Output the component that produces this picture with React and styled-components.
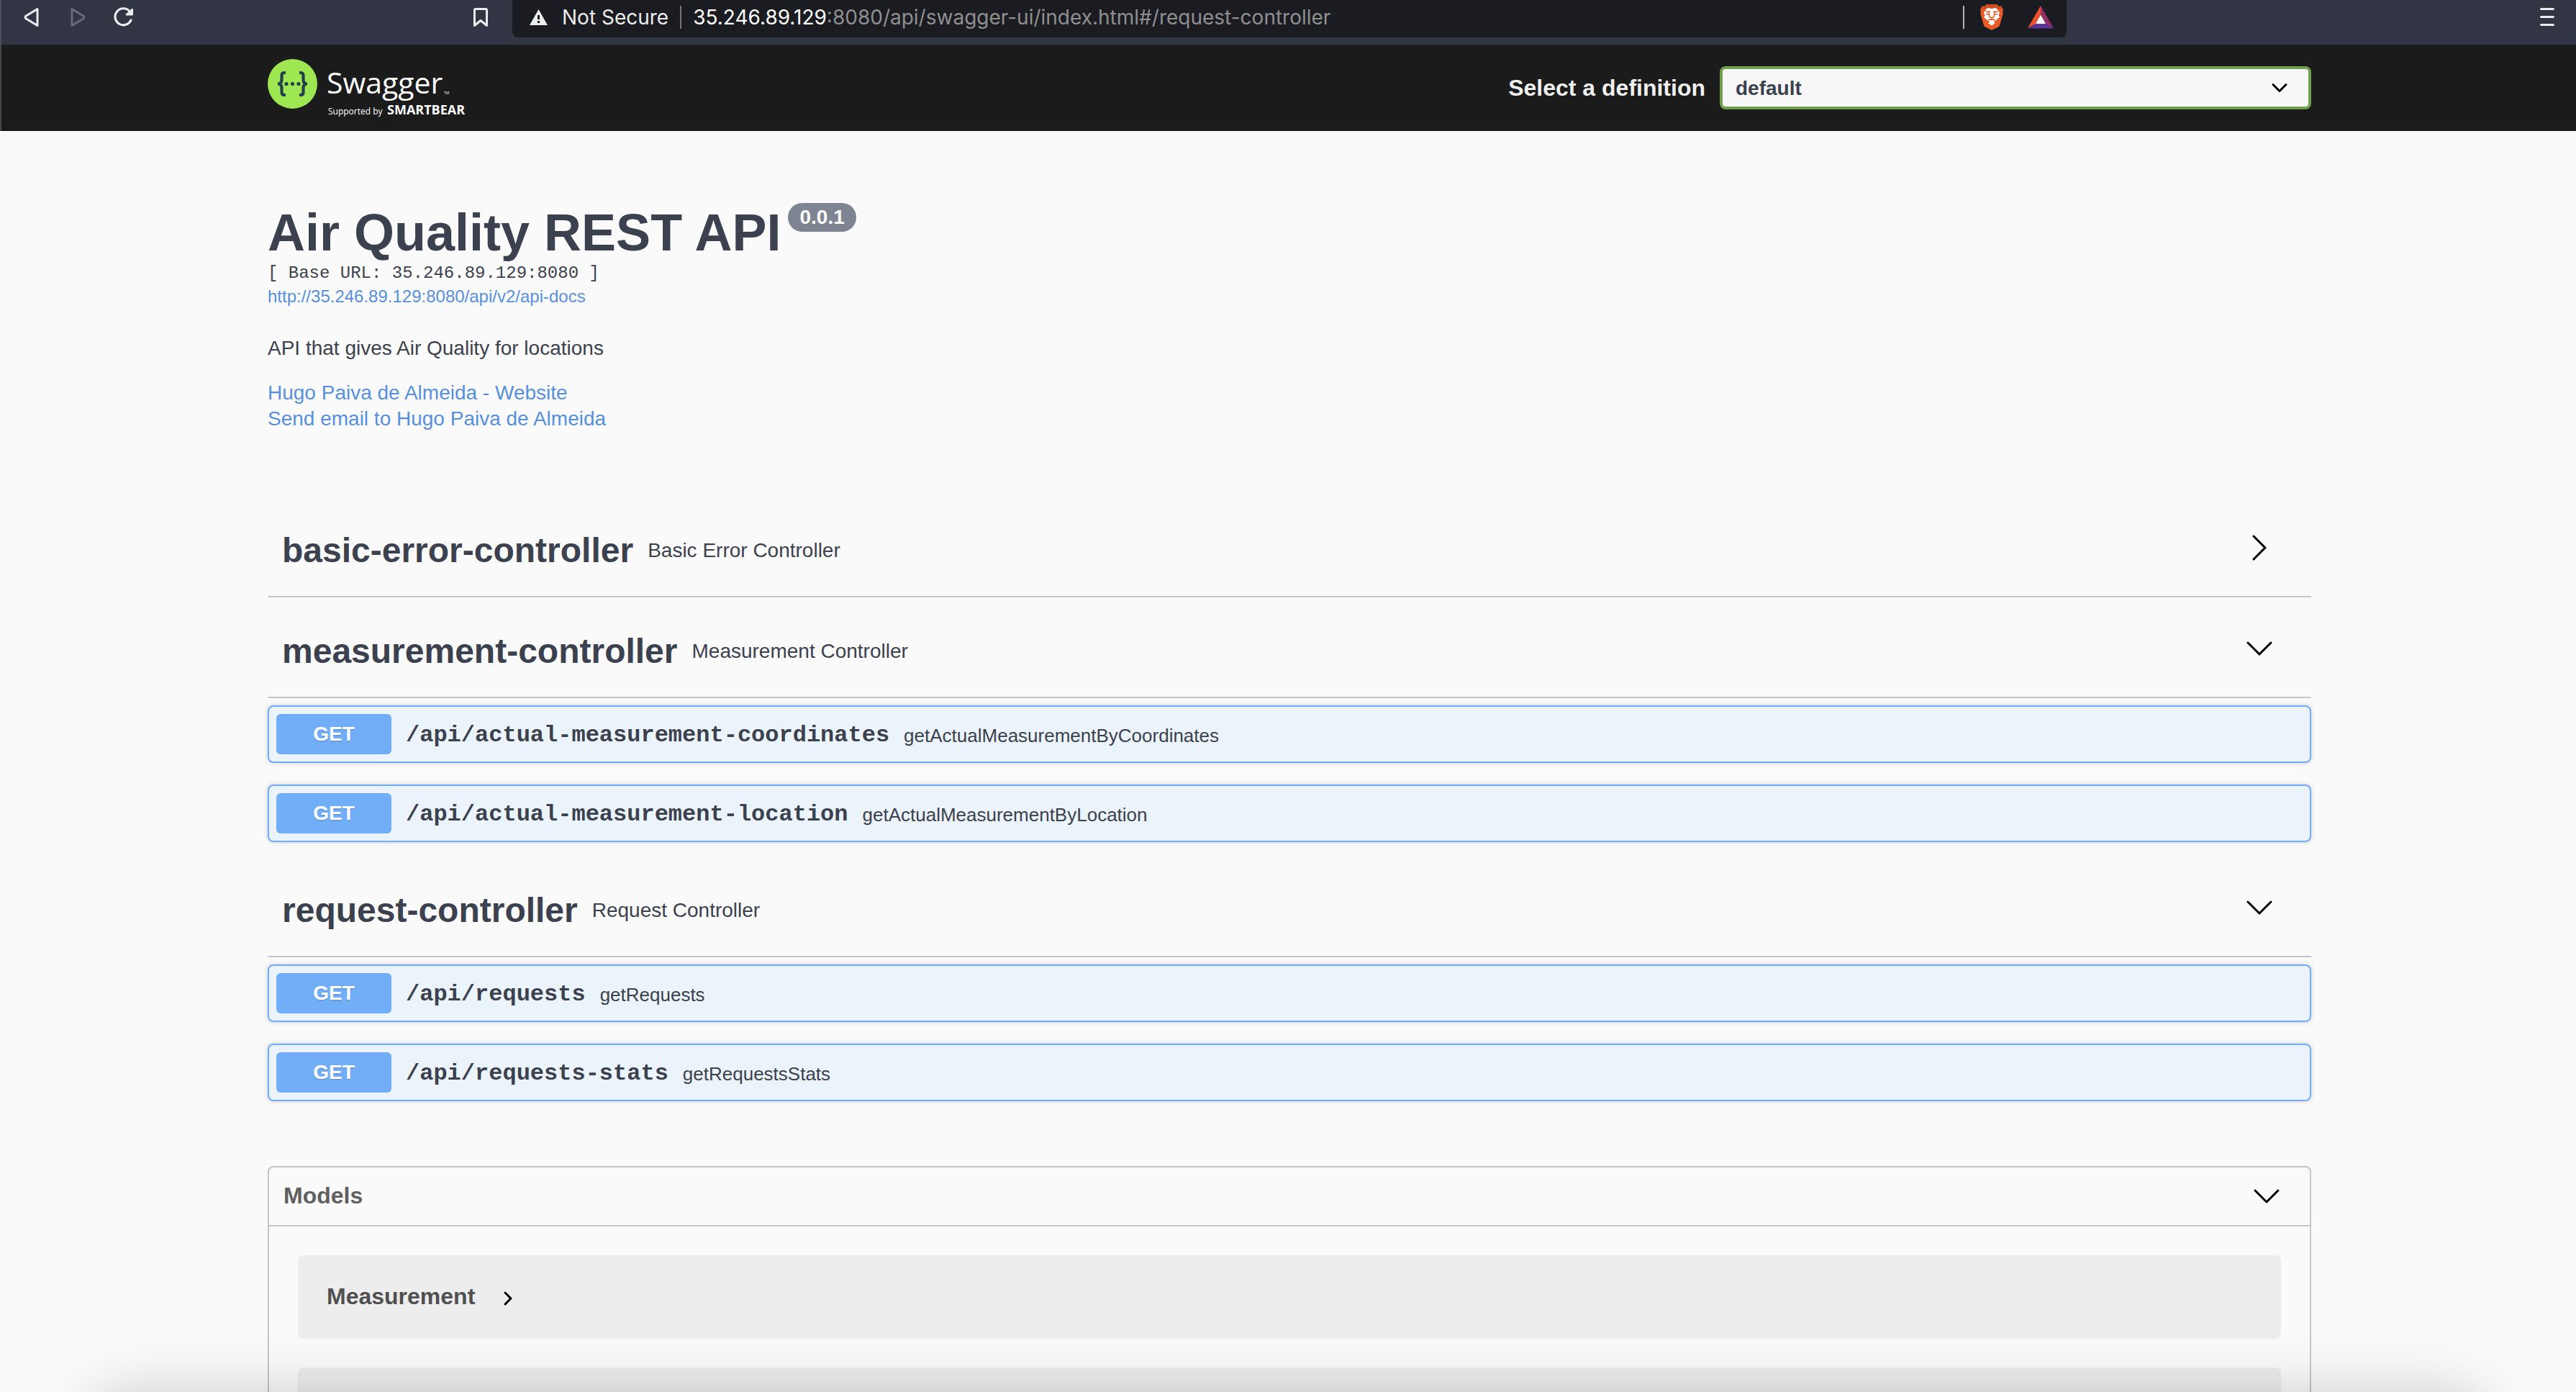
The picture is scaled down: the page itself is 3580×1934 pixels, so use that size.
import React from "react";
import styled, { createGlobalStyle } from "styled-components";

const sans = `"Liberation Sans", Arial, sans-serif`;
const mono = `"Liberation Mono", "Courier New", monospace`;
const ui = `Inter, Roboto, sans-serif`;

const color = {
  page: "#fafafa",
  text: "#3c414f",
  link: "#5890dc",
  line: "#c4c4cb",
  get: "#72adf8",
  getSoft: "#ebf3fb",
  chrome: "#323544",
  address: "#1b1c21",
  topbar: "#1b1b1b",
};

const GlobalStyle = createGlobalStyle`
  * { box-sizing: border-box; }
  html, body { height: 100%; }
  body {
    margin: 0;
    overflow: hidden;
    background: ${color.page};
    color: ${color.text};
    font-family: ${sans};
  }
  h1, h2, h3, p { margin: 0; }
  button { font: inherit; color: inherit; background: none; border: 0; padding: 0; cursor: pointer; }
  a { color: ${color.link}; text-decoration: none; }
  svg { display: block; flex: none; }
`;

/* ---------- browser chrome ---------- */

const Chrome = styled.nav`
  display: flex;
  height: 62px;
  padding: 0 20px 0 24px;
  background: ${color.chrome};
  box-shadow: inset 2px 0 #4b4e5b;
`;

const ChromeGroup = styled.div`
  display: flex;
  align-items: center;
  gap: ${(p) => p.$gap}px;
  height: 48px;
`;

const NavButtons = styled(ChromeGroup)`
  flex: 0 1 624px;
`;

const ChromeButton = styled.button`
  display: flex;
  align-items: center;
  justify-content: center;
  flex: none;
  width: 40px;
  height: 48px;
`;

const MenuButton = styled(ChromeButton)`
  margin-left: auto;
`;

const AddressBar = styled.div`
  display: flex;
  align-items: center;
  justify-content: space-between;
  flex: 0 1 2160px;
  height: 52px;
  margin-left: 24px;
  padding: 0 16px 4px 24px;
  background: ${color.address};
  border-radius: 0 0 8px 8px;
  font-family: ${ui};
  font-size: 28px;
  line-height: 32px;
`;

const Security = styled.button`
  display: flex;
  align-items: center;
  gap: 20px;
  color: #ececec;
`;

const Divider = styled.span`
  width: 2px;
  height: 32px;
  background: ${(p) => (p.$bright ? "#b4b4b6" : "#77777a")};
`;

const Url = styled.span`
  color: #8f8f91;
  strong { font-weight: 400; color: #fff; }
`;

/* ---------- swagger top bar ---------- */

const Container = styled.div`
  width: 100%;
  max-width: 2924px;
  margin: 0 auto;
  padding: 0 40px 0 44px;
`;

const Topbar = styled.header`
  background: ${color.topbar};
  box-shadow: inset 2px 0 #464646;
`;

const TopbarRow = styled(Container)`
  display: flex;
  align-items: center;
  justify-content: space-between;
  height: 120px;
`;

const Definition = styled.label`
  display: flex;
  align-items: center;
  gap: 20px;
  color: #f0f0f0;
  font-size: 32px;
  line-height: 36px;
  font-weight: 700;
`;

const SelectWrap = styled.span`
  display: grid;
  align-items: center;
  width: 822px;
  > * { grid-area: 1 / 1; }
  svg { justify-self: end; margin-right: 32px; pointer-events: none; }
`;

const Select = styled.select`
  appearance: none;
  width: 100%;
  height: 60px;
  padding: 0 18px;
  border: 4px solid #709f4d;
  border-radius: 8px;
  background: #f7f7f7;
  color: ${color.text};
  font: 700 28px ${sans};
`;

/* ---------- API information ---------- */

const Info = styled.section`
  display: flex;
  flex-direction: column;
  align-items: flex-start;
  padding: 100px 0 90px;
`;

const TitleRow = styled.div`
  display: flex;
  align-items: flex-start;
  gap: 10px;
`;

const Title = styled.h1`
  font-size: 72px;
  line-height: 82px;
`;

const Version = styled.span`
  height: 40px;
  padding: 0 16px;
  border-radius: 20px;
  background: #7e8492;
  color: #fff;
  font-size: 28px;
  line-height: 40px;
  font-weight: 700;
`;

const BaseUrl = styled.p`
  font-family: ${mono};
  font-size: 24px;
  line-height: 32px;
  white-space: pre;
`;

const DocsLink = styled.a`
  font-size: 24px;
  line-height: 32px;
`;

const Description = styled.p`
  margin: 38px 0 26px;
  font-size: 28px;
  line-height: 36px;
`;

const ContactLink = styled.a`
  font-size: 28px;
  line-height: 36px;
`;

/* ---------- operations ---------- */

const Tag = styled.section`
  padding-bottom: ${(p) => (p.$open ? 20 : 0)}px;
`;

const TagHeader = styled.div`
  display: flex;
  align-items: center;
  justify-content: space-between;
  height: 140px;
  padding: 4px 52px 0 20px;
  border-bottom: 2px solid ${color.line};
`;

const TagText = styled.div`
  display: flex;
  align-items: center;
  gap: 20px;
  padding-top: 8px;
`;

const TagName = styled.h3`
  font-size: 48px;
  line-height: 56px;
`;

const TagNote = styled.p`
  font-size: 28px;
  line-height: 36px;
`;

const Operations = styled.div`
  display: grid;
  gap: 30px;
  padding-top: 10px;
`;

const Operation = styled.button`
  display: flex;
  align-items: center;
  gap: 20px;
  width: 100%;
  padding: 10px;
  border: 2px solid ${color.get};
  border-radius: 8px;
  background: ${color.getSoft};
  box-shadow: 0 0 6px rgba(0, 0, 0, 0.19);
  text-align: left;
`;

const Method = styled.span`
  width: 160px;
  border-radius: 6px;
  background: ${color.get};
  color: #fff;
  font-size: 28px;
  line-height: 56px;
  font-weight: 700;
  text-align: center;
  text-shadow: 0 2px 0 rgba(0, 0, 0, 0.1);
`;

const Path = styled.span`
  padding-top: 4px;
  font-family: ${mono};
  font-size: 32px;
  line-height: 40px;
  font-weight: 700;
`;

const Summary = styled.span`
  padding-top: 4px;
  font-size: 26px;
  line-height: 40px;
`;

/* ---------- models ---------- */

const Models = styled.section`
  margin-top: 70px;
  border: 2px solid ${color.line};
  border-radius: 8px;
`;

const ModelsHeader = styled.div`
  display: flex;
  align-items: center;
  justify-content: space-between;
  height: 82px;
  padding: 0 40px 0 20px;
  border-bottom: 2px solid ${color.line};
`;

const ModelsTitle = styled.h2`
  padding-bottom: 2px;
  color: #606060;
  font-size: 32px;
  line-height: 36px;
`;

const ModelList = styled.div`
  display: grid;
  gap: 40px;
  padding: 40px;
`;

const Model = styled.div`
  height: 116px;
  padding: 0 40px;
  border-radius: 8px;
  background: #ededed;
`;

const ModelButton = styled.button`
  display: flex;
  align-items: center;
  gap: 26px;
  height: 116px;
  color: #505050;
  font-size: 32px;
  line-height: 36px;
  font-weight: 700;
  span { padding-bottom: 2px; }
  svg { margin-top: 4px; }
`;

const DockShadow = styled.div`
  position: fixed;
  top: 100%;
  left: 120px;
  right: 120px;
  height: 300px;
  border-radius: 60px;
  box-shadow: 0 0 80px rgba(0, 0, 0, 0.19);
  pointer-events: none;
`;

/* ---------- drawings ---------- */

const Chevron = ({ dir = "down", size = 40, reach = 16, stroke = 3 }) => {
  const c = size / 2;
  const h = reach / 2;
  const points =
    dir === "down"
      ? `${c - reach},${c - h} ${c},${c + h} ${c + reach},${c - h}`
      : `${c - h},${c - reach} ${c + h},${c} ${c - h},${c + reach}`;
  return (
    <svg width={size} height={size} viewBox={`0 0 ${size} ${size}`} fill="none" stroke="#000" strokeWidth={stroke} strokeLinecap="round" strokeLinejoin="round" aria-hidden="true">
      <polyline points={points} />
    </svg>
  );
};

const TriangleIcon = ({ flip, tone }) => (
  <svg width="24" height="30" viewBox="0 0 24 30" fill="none" stroke={tone} strokeWidth="3" strokeLinejoin="round" aria-hidden="true">
    <path d={flip ? "M4 3.500V26.500L20.500 16.500Q21.500 15 20.500 13.500Z" : "M20 3.500V26.500L3.500 16.500Q2.500 15 3.500 13.500Z"} />
  </svg>
);

const ReloadIcon = () => (
  <svg width="30" height="30" viewBox="0 0 30 30" fill="none" aria-hidden="true">
    <path d="M25 19A11.500 11.500 0 1 1 23 6.500" stroke="#ececec" strokeWidth="3.200" strokeLinecap="round" />
    <path d="M19 12.500Q17 12.500 18 10.500L26 3Q28 2 28 4.500V11Q28 12.500 26.500 12.500Z" fill="#ececec" />
  </svg>
);

const BookmarkIcon = () => (
  <svg width="22" height="30" viewBox="0 0 22 30" fill="none" stroke="#ececec" strokeWidth="3" strokeLinejoin="round" aria-hidden="true">
    <path d="M2.500 5Q2.500 3.500 4 3.500H18Q19.500 3.500 19.500 5V26.500L11 19.500L2.500 26.500Z" />
  </svg>
);

const WarningIcon = () => (
  <svg width="25" height="22" viewBox="0 0 25 22" aria-hidden="true">
    <path d="M12.500 0L25 22H0Z" fill="#ececec" />
    <path d="M11 8h3v6h-3zM11 16h3v3h-3z" fill={color.address} />
  </svg>
);

const BraveIcon = () => (
  <svg width="32" height="36" viewBox="0 0 32 36" aria-hidden="true">
    <path d="M9 0h14l3 3 3-.5 3 5-1 3 .8 2.500L27 29q-.5 1.500-2 2.500L16 36l-9-4.500q-1.500-1-2-2.500L.2 13 1 10.500l-1-3 3-5L6 3Z" fill="#ea5b27" />
    <path d="M9 0h14l3 3 3-.5 2.500 4L27 7l-4-1H9L5 7 .5 6.500 3 2.500 6 3Z" fill="#d04f20" />
    <path d="M16 6l6-1 5 6.500-1.500 4L27 18l-6 5-2.500 1.500L21 26l-5 3.500L11 26l2.500-1.500L11 23 5 18l1.500-2.500L5 11.500 10 5Z" fill="#fff" />
    <path d="M7.500 10.500l5.500-.5-1 3 1 4.500L16 19l3-1.500 1-4.500-1-3 5.500.5M8 13.500l4 .5M24 13.500l-4 .5M16 19v3M11 22l5-1.500L21 22" fill="none" stroke="#ea5b27" strokeWidth="1.500" />
  </svg>
);

const BatIcon = () => (
  <svg width="36" height="32" viewBox="0 0 36 32" aria-hidden="true">
    <path d="M18 0L0 31L11 25L18 12Z" fill="#f0512f" />
    <path d="M18 0L36 31L25 25L18 12Z" fill="#932f63" />
    <path d="M0 31.500H36L25 25H11Z" fill="#5d3597" />
    <path d="M18 12.500L25 25H11Z" fill="#fff" />
  </svg>
);

const MenuIcon = () => (
  <svg width="20" height="26" viewBox="0 0 20 26" stroke="#ececec" strokeWidth="3" strokeLinecap="round" aria-hidden="true">
    <path d="M1.500 1.500H18.500M1.500 12.500H18.500M1.500 23.500H18.500" />
  </svg>
);

const SwaggerLogo = () => (
  <svg width="288" height="88" viewBox="0 -4 288 88" role="img" aria-label="Swagger, supported by SmartBear">
    <circle cx="34.500" cy="34.500" r="34.500" fill="#9fe653" />
    <g fill="none" stroke="#22404a" strokeWidth="4.200">
      <path d="M25 19H23Q19.500 19 19.500 23V29Q19.500 34.500 14 34.500Q19.500 34.500 19.500 40V46Q19.500 50 23 50H25" />
      <path d="M44 19H46Q49.500 19 49.500 23V29Q49.500 34.500 55 34.500Q49.500 34.500 49.500 40V46Q49.500 50 46 50H44" />
    </g>
    <g fill="#22404a">
      <circle cx="26" cy="34.500" r="2.600" />
      <circle cx="34.500" cy="34.500" r="2.600" />
      <circle cx="43" cy="34.500" r="2.600" />
    </g>
    <g fill="#fff" fontFamily='"Open Sans", sans-serif'>
      <text x="82" y="48" fontSize="41">Swagger</text>
      <text x="245" y="49" fontSize="5">TM</text>
      <text x="84" y="77" fontSize="12">Supported by</text>
      <text x="166" y="77" fontSize="18" fontWeight="700">SMARTBEAR</text>
    </g>
  </svg>
);

/* ---------- data ---------- */

const tags = [
  { name: "basic-error-controller", note: "Basic Error Controller", operations: [] },
  {
    name: "measurement-controller",
    note: "Measurement Controller",
    operations: [
      ["/api/actual-measurement-coordinates", "getActualMeasurementByCoordinates"],
      ["/api/actual-measurement-location", "getActualMeasurementByLocation"],
    ],
  },
  {
    name: "request-controller",
    note: "Request Controller",
    operations: [
      ["/api/requests", "getRequests"],
      ["/api/requests-stats", "getRequestsStats"],
    ],
  },
];

export default function App() {
  return (
    <>
      <GlobalStyle />
      <Chrome>
        <NavButtons $gap={24}>
          <ChromeButton aria-label="Back"><TriangleIcon tone="#ececec" /></ChromeButton>
          <ChromeButton aria-label="Forward"><TriangleIcon flip tone="#696b76" /></ChromeButton>
          <ChromeButton aria-label="Reload"><ReloadIcon /></ChromeButton>
        </NavButtons>
        <ChromeButton aria-label="Bookmark this page"><BookmarkIcon /></ChromeButton>
        <AddressBar>
          <ChromeGroup $gap={16}>
            <Security><WarningIcon />Not Secure</Security>
            <Divider />
            <Url><strong>35.246.89.129</strong>:8080/api/swagger-ui/index.html#/request-controller</Url>
          </ChromeGroup>
          <ChromeGroup $gap={18}>
            <Divider $bright />
            <ChromeGroup $gap={28}>
              <ChromeButton aria-label="Brave Shields"><BraveIcon /></ChromeButton>
              <ChromeButton aria-label="Brave Rewards"><BatIcon /></ChromeButton>
            </ChromeGroup>
          </ChromeGroup>
        </AddressBar>
        <MenuButton aria-label="Menu"><MenuIcon /></MenuButton>
      </Chrome>

      <Topbar>
        <TopbarRow>
          <a href="#swagger"><SwaggerLogo /></a>
          <Definition htmlFor="definition">
            Select a definition
            <SelectWrap>
              <Select id="definition" defaultValue="default">
                <option value="default">default</option>
              </Select>
              <Chevron size={24} reach={9} />
            </SelectWrap>
          </Definition>
        </TopbarRow>
      </Topbar>

      <Container as="main">
        <Info>
          <TitleRow>
            <Title>Air Quality REST API</Title>
            <Version>0.0.1</Version>
          </TitleRow>
          <BaseUrl>[ Base URL: 35.246.89.129:8080 ]</BaseUrl>
          <DocsLink href="#api-docs">http://35.246.89.129:8080/api/v2/api-docs</DocsLink>
          <Description>API that gives Air Quality for locations</Description>
          <ContactLink href="#website">Hugo Paiva de Almeida - Website</ContactLink>
          <ContactLink href="#email">Send email to Hugo Paiva de Almeida</ContactLink>
        </Info>

        {tags.map(({ name, note, operations }) => {
          const open = operations.length > 0;
          return (
            <Tag key={name} $open={open}>
              <TagHeader>
                <TagText>
                  <TagName>{name}</TagName>
                  <TagNote>{note}</TagNote>
                </TagText>
                <button aria-label={`Toggle ${name}`} aria-expanded={open}>
                  <Chevron dir={open ? "down" : "right"} />
                </button>
              </TagHeader>
              {open && (
                <Operations>
                  {operations.map(([path, summary]) => (
                    <Operation key={path}>
                      <Method>GET</Method>
                      <Path>{path}</Path>
                      <Summary>{summary}</Summary>
                    </Operation>
                  ))}
                </Operations>
              )}
            </Tag>
          );
        })}

        <Models>
          <ModelsHeader>
            <ModelsTitle>Models</ModelsTitle>
            <button aria-label="Toggle models" aria-expanded="true"><Chevron /></button>
          </ModelsHeader>
          <ModelList>
            <Model>
              <ModelButton aria-expanded="false">
                <span>Measurement</span>
                <Chevron dir="right" reach={8} />
              </ModelButton>
            </Model>
            <Model />
          </ModelList>
        </Models>
      </Container>
      <DockShadow />
    </>
  );
}
